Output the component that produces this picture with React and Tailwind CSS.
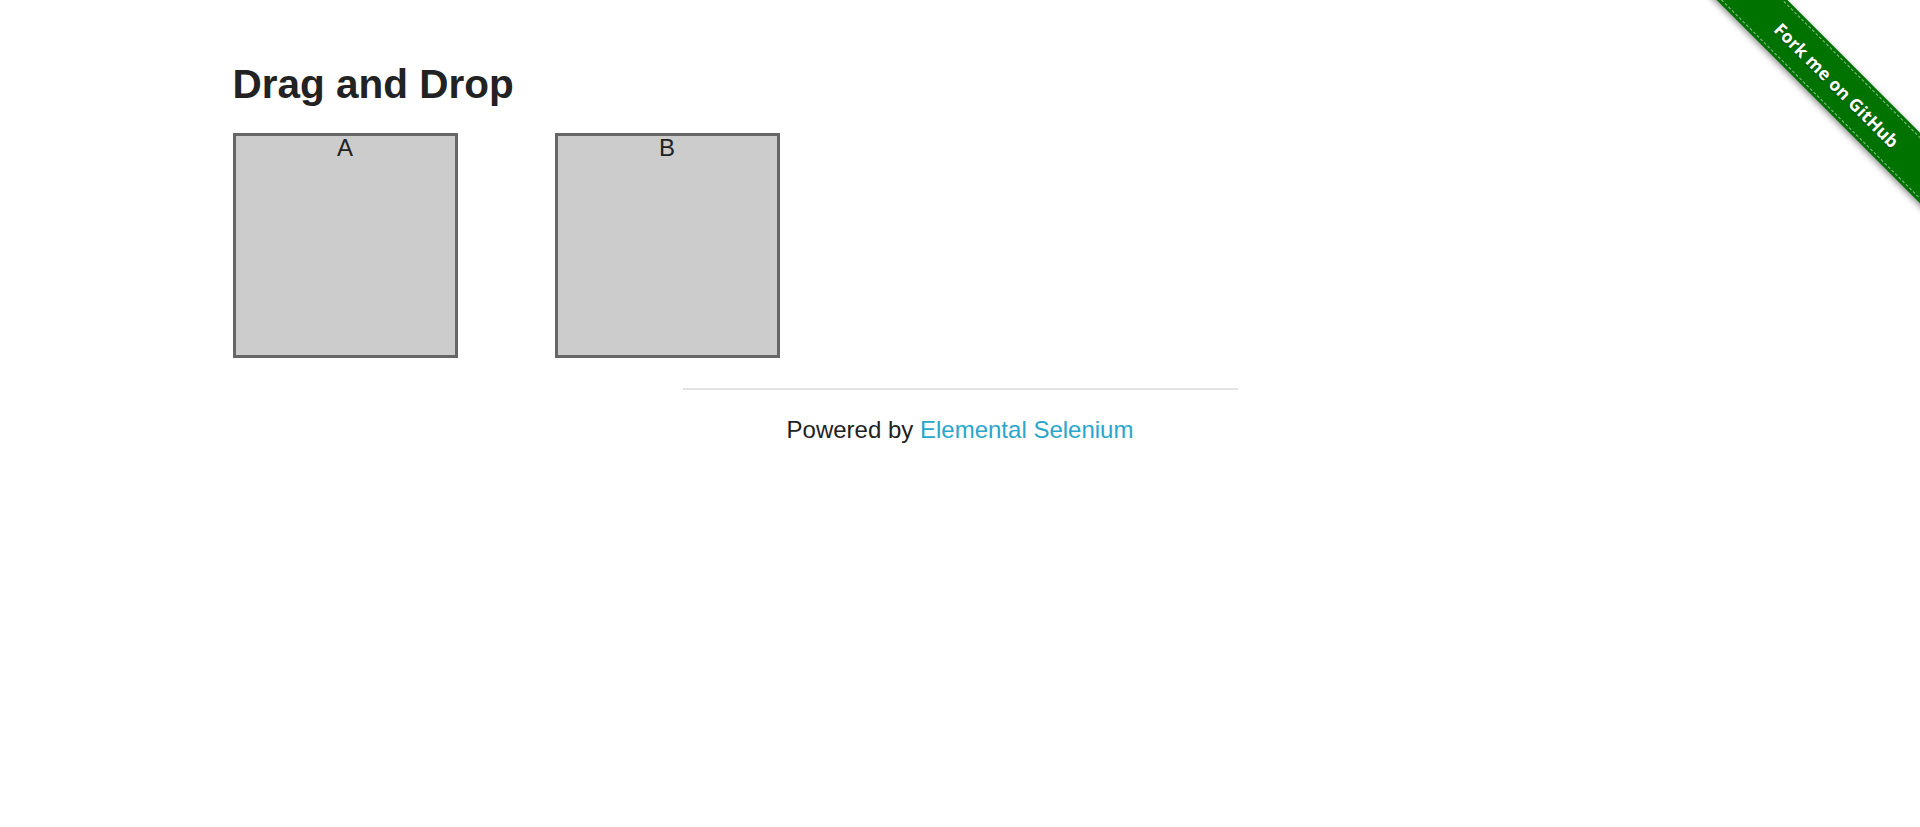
function Column({ label }) {
  return (
    <div className="w-[225px] h-[225px] box-border border-[3px] border-[#666666] bg-[#cccccc] text-center cursor-move">
      <header className="text-[24px] leading-none text-[#222222]">{label}</header>
    </div>
  );
}

function ForkRibbon() {
  return (
    <div className="absolute top-0 right-0 w-[230px] h-[230px] overflow-hidden pointer-events-none">
      <a
        href="#"
        className="absolute left-[-18px] top-[60px] w-[330px] h-[50px] rotate-45 bg-[#007200] p-[3px] shadow-[0_2px_6px_rgba(0,0,0,0.45)] pointer-events-auto"
      >
        <div className="h-full flex items-center justify-center border-y border-dashed border-white/55 text-white font-bold text-[17.5px] tracking-[0.2px] [font-family:'Open_Sans','DejaVu_Sans',sans-serif] [text-shadow:0_1px_1px_rgba(0,0,0,0.5)]">
          Fork me on GitHub
        </div>
      </a>
    </div>
  );
}

export default function App() {
  return (
    <div className="relative min-h-[827px] bg-white text-[#222222] [font-family:'Liberation_Sans',Arial,sans-serif]">
      <ForkRibbon />

      <div className="max-w-[1500px] mx-auto px-[22.5px] pt-[60px]">
        <h3 className="text-[40.5px] leading-[48px] font-bold">Drag and Drop</h3>

        <div className="flex gap-[97px] mt-[25px]">
          <Column label="A" />
          <Column label="B" />
        </div>
      </div>

      <div className="mt-[30px] flex flex-col items-center">
        <hr className="w-[555px] border-0 border-t-2 border-[#e3e3e3]" />
        <div className="mt-[22px] text-[24px] leading-[36px] text-center">
          Powered by{" "}
          <a href="#" className="text-[#2ba6cb]">
            Elemental Selenium
          </a>
        </div>
      </div>
    </div>
  );
}
